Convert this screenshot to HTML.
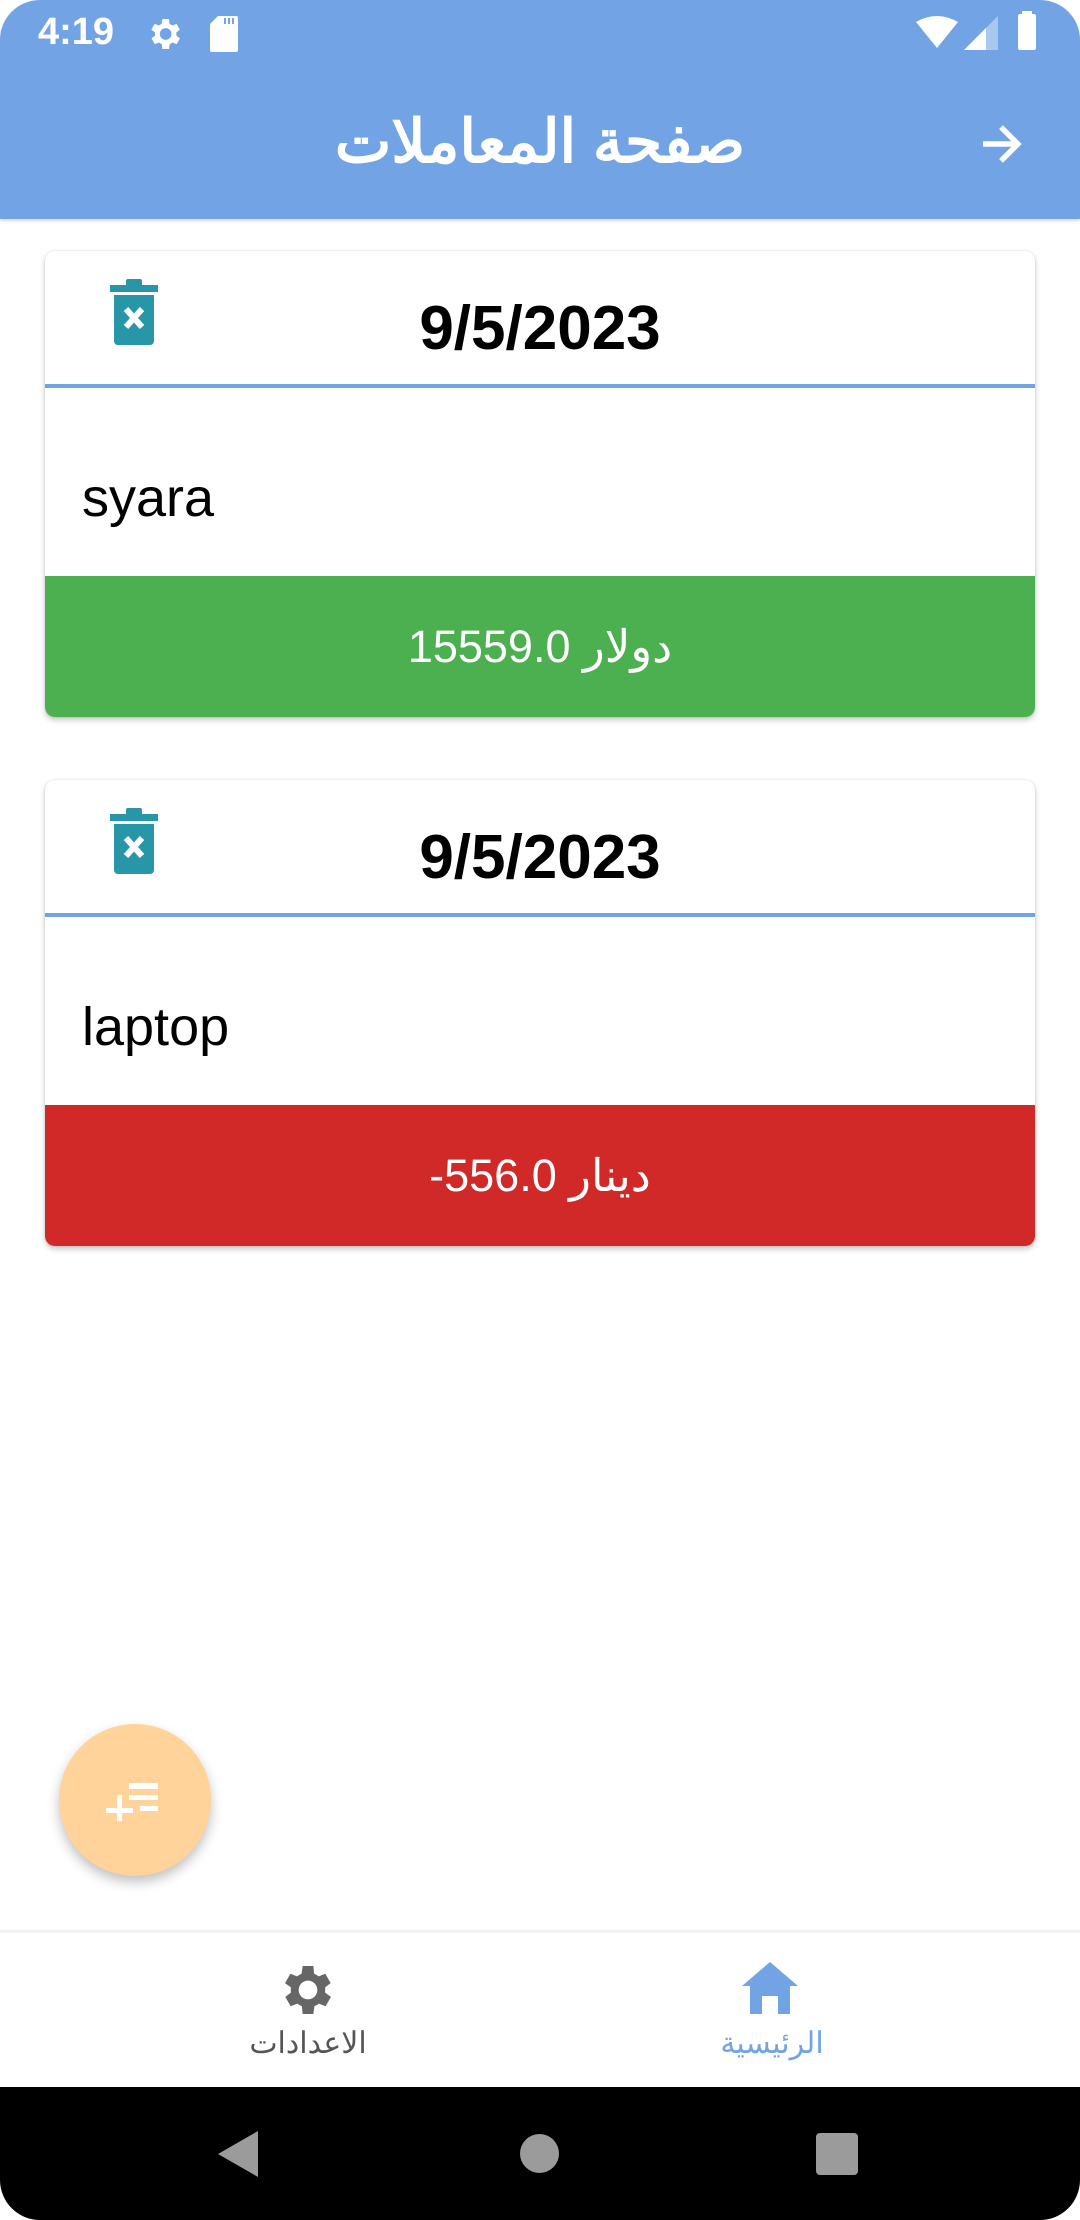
<!DOCTYPE html>
<html><head><meta charset="utf-8"><style>
*{margin:0;padding:0;box-sizing:border-box}
body{width:1080px;height:2220px;background:#fff;position:relative;overflow:hidden;font-family:"Liberation Sans","Noto Sans CJK SC",sans-serif}
.abs{position:absolute}
.card{position:absolute;left:45px;width:990px;height:466px;background:#fff;border-radius:10px;box-shadow:0 3px 6px rgba(0,0,0,.22),0 0 2px rgba(0,0,0,.12);overflow:hidden}
.date{position:absolute;left:0;right:0;top:42px;text-align:center;font-weight:bold;font-size:62px;color:#000}
.div{position:absolute;left:0;right:0;top:133px;height:4px;background:#72a4e5}
.name{position:absolute;left:37px;top:216px;font-size:54px;color:#000}
.band{position:absolute;left:0;right:0;bottom:0;height:141px;color:#fff;font-size:45px;text-align:center;line-height:141px}
</style></head><body>
<div class="abs" style="left:0;top:0;width:1080px;height:219px;background:#72a4e5;border-radius:40px 40px 0 0;box-shadow:0 2px 3px rgba(0,0,0,.15)"></div>
<div class="abs" style="left:38px;top:11px;font-size:38px;font-weight:bold;color:#fff">4:19</div>
<svg class="abs" style="left:144px;top:14px" width="40" height="40" viewBox="0 0 24 24"><path fill="#fff" d="M19.4 13a7.5 7.5 0 0 0 0-2l2.1-1.6-2-3.5-2.5 1a7.3 7.3 0 0 0-1.7-1L15 3h-4l-.4 2.9a7.3 7.3 0 0 0-1.7 1l-2.5-1-2 3.5L6.6 11a7.5 7.5 0 0 0 0 2l-2.1 1.6 2 3.5 2.5-1c.5.4 1.1.7 1.7 1L11 21h4l.4-2.9c.6-.3 1.2-.6 1.7-1l2.5 1 2-3.5zM13 15.5a3.5 3.5 0 1 1 0-7 3.5 3.5 0 0 1 0 7z"/></svg>
<svg class="abs" style="left:210px;top:16px" width="28" height="36" viewBox="0 0 14 18"><path fill="#fff" d="M4 0h9a1 1 0 0 1 1 1v16a1 1 0 0 1-1 1H1a1 1 0 0 1-1-1V4z"/><path fill="#72a4e5" d="M7 1h1v3H7zM9 1h1v3H9zM11 1h1v3h-1z"/></svg>
<svg class="abs" style="left:916px;top:16px" width="42" height="34" viewBox="0 0 42 34"><path fill="#fff" d="M0 6Q21-6 42 6L21 32z"/></svg>
<svg class="abs" style="left:964px;top:16px" width="34" height="34" viewBox="0 0 34 34"><path fill="#a9c8f0" d="M34 0V34H0z"/><path fill="#fff" d="M22 12V34H0L22 12z"/></svg>
<div class="abs" style="left:1018px;top:14px;width:18px;height:36px;background:#fff;border-radius:2px"></div>
<div class="abs" style="left:1022px;top:11px;width:10px;height:4px;background:#fff"></div>
<div class="abs" style="left:0;width:1080px;top:107px;text-align:center;font-size:60px;font-weight:bold;color:#fff" dir="rtl">صفحة المعاملات</div>
<svg class="abs" style="left:974px;top:117px" width="54" height="54" viewBox="0 0 24 24"><path fill="none" stroke="#fff" stroke-width="2.4" d="M4 12h15M12 4.5l7.5 7.5-7.5 7.5"/></svg>

<div class="card" style="top:251px">
<svg class="abs" style="left:65px;top:28px" width="48" height="66" viewBox="0 0 24 33"><rect x="0" y="3" width="24" height="3.5" fill="#2696a8"/><rect x="8" y="0" width="8" height="4" rx="1" fill="#2696a8"/><path fill="#2696a8" d="M2 8h20v23a2 2 0 0 1-2 2H4a2 2 0 0 1-2-2z"/><path stroke="#fff" stroke-width="3" d="M8 15l8 9M16 15l-8 9"/></svg>
<div class="date">9/5/2023</div><div class="div"></div>
<div class="name">syara</div>
<div class="band" style="background:#4caf50"><span dir="ltr">15559.0 دولار</span></div>
</div>

<div class="card" style="top:780px">
<svg class="abs" style="left:65px;top:28px" width="48" height="66" viewBox="0 0 24 33"><rect x="0" y="3" width="24" height="3.5" fill="#2696a8"/><rect x="8" y="0" width="8" height="4" rx="1" fill="#2696a8"/><path fill="#2696a8" d="M2 8h20v23a2 2 0 0 1-2 2H4a2 2 0 0 1-2-2z"/><path stroke="#fff" stroke-width="3" d="M8 15l8 9M16 15l-8 9"/></svg>
<div class="date">9/5/2023</div><div class="div"></div>
<div class="name">laptop</div>
<div class="band" style="background:#d12828"><span dir="ltr">-556.0 دينار</span></div>
</div>

<div class="abs" style="left:59px;top:1724px;width:152px;height:152px;border-radius:50%;background:#ffd399;box-shadow:0 6px 12px rgba(0,0,0,.25)"></div>
<div class="abs" style="left:129px;top:1783px;width:29px;height:6px;background:#fff"></div>
<div class="abs" style="left:129px;top:1795px;width:29px;height:5px;background:#fff"></div>
<div class="abs" style="left:140px;top:1806px;width:18px;height:5px;background:#fff"></div>
<div class="abs" style="left:106px;top:1808px;width:27px;height:5px;background:#fff"></div>
<div class="abs" style="left:117px;top:1795px;width:5px;height:26px;background:#fff"></div>

<div class="abs" style="left:0;top:1930px;width:1080px;height:3px;background:#f2f2f2"></div>
<svg class="abs" style="left:276px;top:1958px" width="64" height="64" viewBox="0 0 24 24"><path fill="#666" d="M19.4 13a7.5 7.5 0 0 0 0-2l2.1-1.6-2-3.5-2.5 1a7.3 7.3 0 0 0-1.7-1L15 3h-4l-.4 2.9a7.3 7.3 0 0 0-1.7 1l-2.5-1-2 3.5L6.6 11a7.5 7.5 0 0 0 0 2l-2.1 1.6 2 3.5 2.5-1c.5.4 1.1.7 1.7 1L11 21h4l.4-2.9c.6-.3 1.2-.6 1.7-1l2.5 1 2-3.5zM13 15.5a3.5 3.5 0 1 1 0-7 3.5 3.5 0 0 1 0 7z" transform="translate(-1 0)"/></svg>
<div class="abs" style="left:208px;width:200px;top:2026px;text-align:center;font-size:30px;color:#555" dir="rtl">الاعدادات</div>
<svg class="abs" style="left:742px;top:1962px" width="56" height="52" viewBox="0 0 28 26"><path fill="#72a4e5" d="M14 0L28 12h-4v14h-6v-9h-8v9H4V12H0z"/><rect x="11" y="17" width="6" height="9" fill="#fff"/></svg>
<div class="abs" style="left:672px;width:200px;top:2026px;text-align:center;font-size:30px;color:#72a4e5" dir="rtl">الرئيسية</div>

<div class="abs" style="left:0;top:2087px;width:1080px;height:133px;background:#000;border-radius:0 0 40px 40px"></div>
<svg class="abs" style="left:218px;top:2131px" width="42" height="46" viewBox="0 0 42 46"><path fill="#9b9b9b" d="M40 0V46L0 23z"/></svg>
<div class="abs" style="left:520px;top:2134px;width:39px;height:39px;border-radius:50%;background:#9b9b9b"></div>
<div class="abs" style="left:816px;top:2133px;width:42px;height:42px;border-radius:4px;background:#9b9b9b"></div>
</body></html>
